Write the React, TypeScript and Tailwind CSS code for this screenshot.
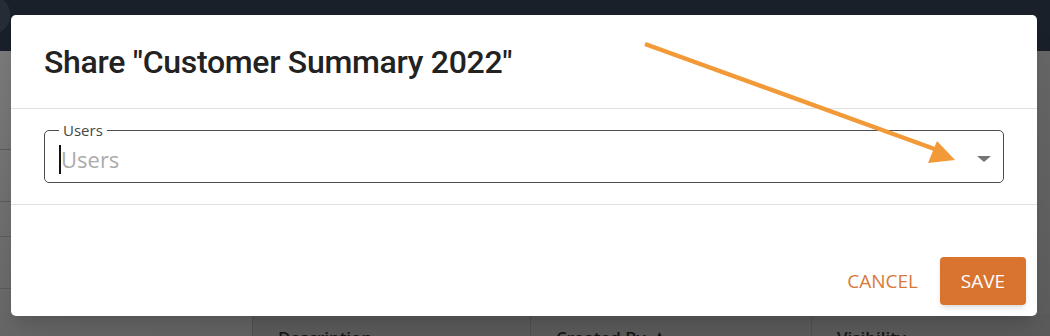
const headers = [
  { label: 'Description', w: 'w-[278px]' },
  { label: 'Created By', w: 'w-[281px]', sort: true },
  { label: 'Visibility', w: 'flex-1' },
];

function Backdrop() {
  return (
    <div className="absolute inset-0 flex flex-col">
      {/* top app bar */}
      <div className="h-[51px] bg-[#19202a] relative shrink-0">
        <div className="absolute -left-[26px] -top-[4px] w-[36px] h-[38px] rounded-full bg-[#262c35]" />
      </div>
      {/* dimmed page */}
      <div className="flex-1 flex bg-gradient-to-br from-[#7a7a7a] via-[#666666] to-[#5c5c5c]">
        <div className="w-[252px] flex flex-col">
          <div className="h-[99px] border-b border-[#5a5a5a]" />
          <div className="h-[52px] border-b border-[#5a5a5a]" />
          <div className="h-[35px] border-b border-[#5a5a5a]" />
          <div className="h-[52px] border-b border-[#5a5a5a]" />
        </div>
        <div className="flex-1 flex flex-col justify-end">
          <div className="h-[22px] flex bg-[#5b5b5b]">
            {headers.map((h) => (
              <div
                key={h.label}
                className={`${h.w} border-l border-[#505050] pl-[25px] pt-[15px] text-[17px] font-semibold text-[#151515] leading-none flex gap-2`}
                style={{ fontFamily: '"Open Sans", sans-serif' }}
              >
                {h.label}
                {h.sort && <span className="text-[12px]">▲</span>}
              </div>
            ))}
          </div>
        </div>
      </div>
    </div>
  );
}

function Arrow() {
  return (
    <svg className="absolute inset-0 pointer-events-none" width={1050} height={336}>
      <line x1={645} y1={44} x2={940} y2={151} stroke="#f29a38" strokeWidth={4.5} />
      <polygon points="955,160 937,141 928,163" fill="#f29a38" />
    </svg>
  );
}

export default function App() {
  return (
    <div className="relative w-[1050px] h-[336px] overflow-hidden">
      <Backdrop />

      {/* share dialog */}
      <div className="absolute left-[11px] top-[15px] w-[1026px] h-[301px] bg-white rounded-[5px] shadow-xl flex flex-col">
        <div className="h-[94px] flex items-center px-[33px] border-b border-[#e0e0e0]">
          <h2
            className="text-[32px] font-medium text-[#222222] tracking-[-0.3px]"
            style={{ fontFamily: 'Roboto, sans-serif' }}
          >
            Share "Customer Summary 2022"
          </h2>
        </div>

        <div className="h-[96px] px-[33px] pt-[22px] border-b border-[#e0e0e0]">
          <fieldset
            className="relative h-[60px] border-[1.5px] border-[#4b4b50] rounded-[5px] px-[14px] -mt-[8px]"
            style={{ fontFamily: '"Open Sans", sans-serif' }}
          >
            <legend className="px-[4px] text-[15px] leading-[15px] text-[#454545]">Users</legend>
            <div className="flex items-center h-[42px]">
              <span className="w-[2px] h-[29px] bg-[#111111]" />
              <span className="text-[22px] text-[#ababab]">Users</span>
              <span className="flex-1" />
              <span className="w-0 h-0 border-l-[7px] border-r-[7px] border-t-[6px] border-l-transparent border-r-transparent border-t-[#757575] mr-[-2px]" />
            </div>
          </fieldset>
        </div>

        <div
          className="flex-1 flex items-end justify-end gap-[22px] pr-[11px] pb-[11px]"
          style={{ fontFamily: '"Open Sans", sans-serif' }}
        >
          <button className="text-[19px] text-[#d77a3a] h-[48px]">CANCEL</button>
          <button className="h-[48px] w-[86px] rounded-[4px] bg-[#d87430] text-white text-[19px] shadow-md">
            SAVE
          </button>
        </div>
      </div>

      <Arrow />
    </div>
  );
}
